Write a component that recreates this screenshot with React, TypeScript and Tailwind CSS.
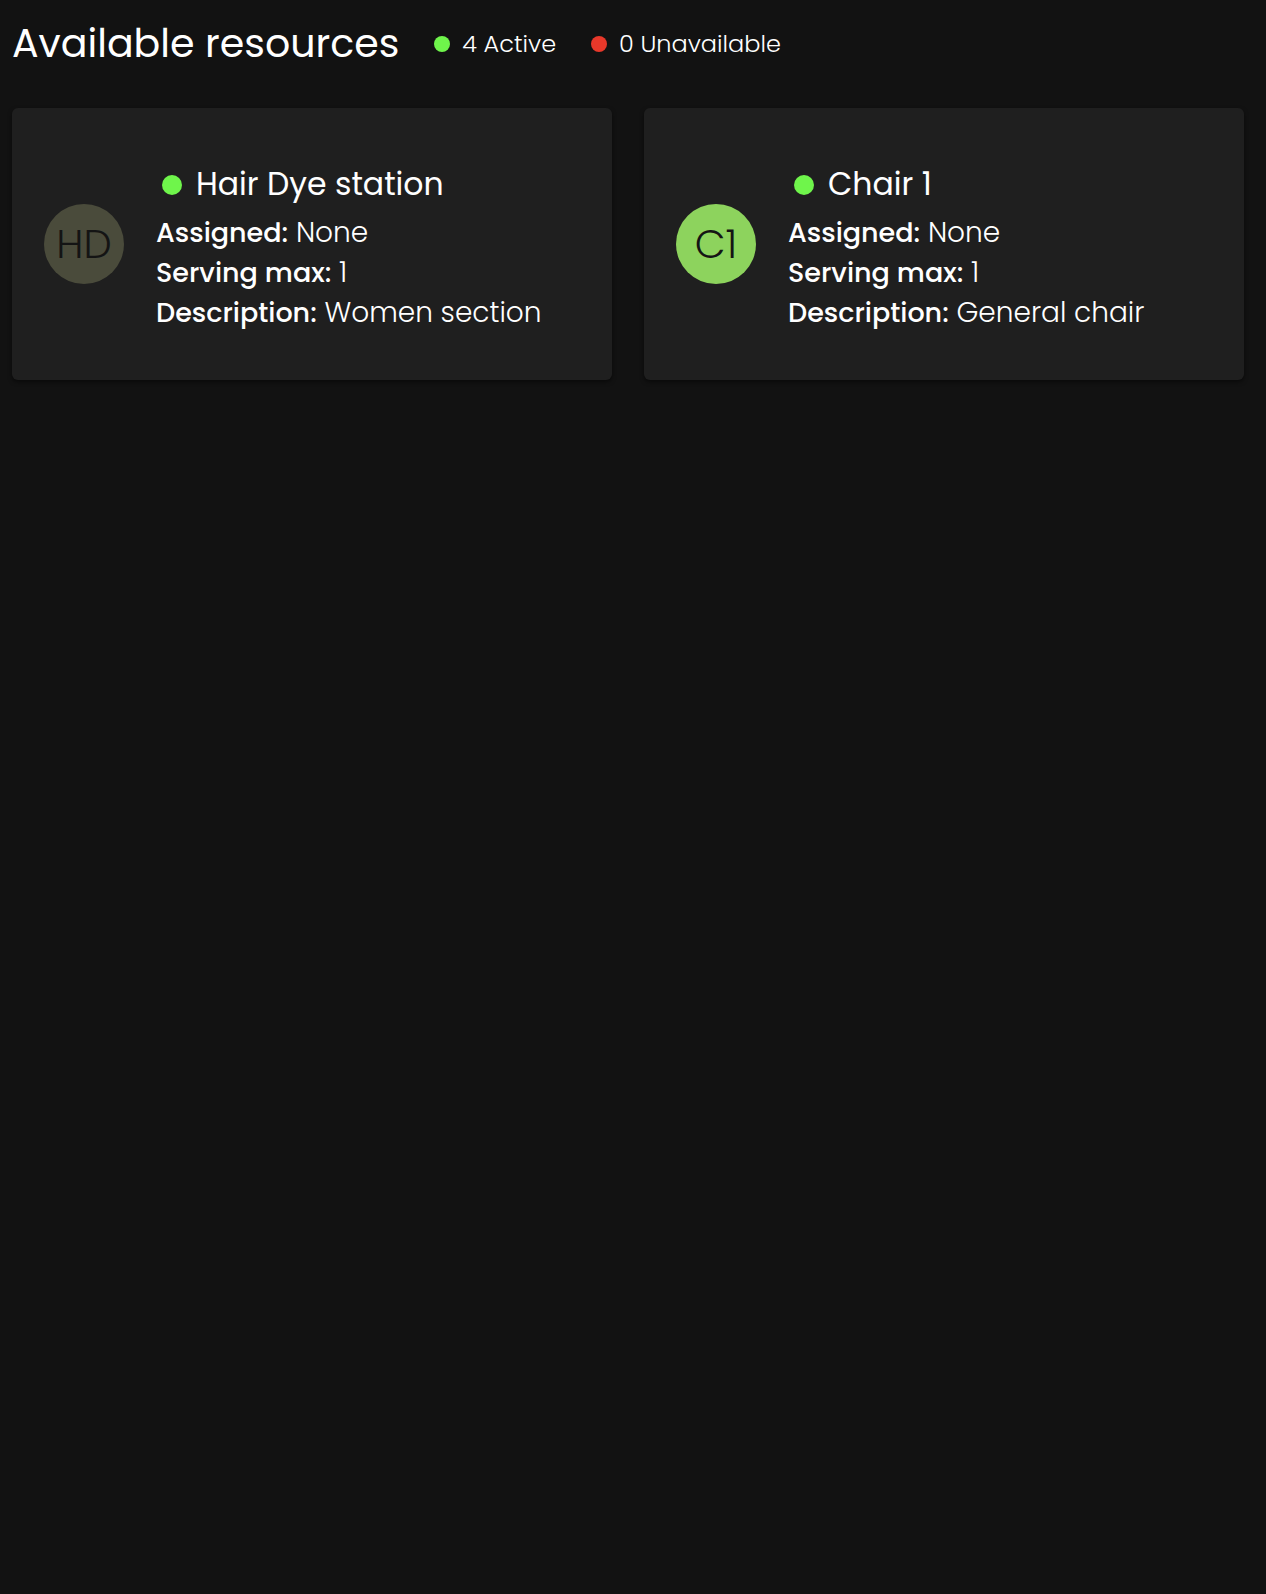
import React from 'react';

interface Resource {
  initials: string;
  name: string;
  assigned: string;
  servingMax: number;
  description: string;
  avatarClass: string;
}

const resources: Resource[] = [
  {
    initials: 'HD',
    name: 'Hair Dye station',
    assigned: 'None',
    servingMax: 1,
    description: 'Women section',
    avatarClass: 'bg-[#4a4b3b]'
  },
  {
    initials: 'C1',
    name: 'Chair 1',
    assigned: 'None',
    servingMax: 1,
    description: 'General chair',
    avatarClass: 'bg-[#8dd35d]'
  }
];

const ResourceCard: React.FC<{ resource: Resource }> = ({ resource }) => {
  return (
    <div className="h-[272px] flex items-center gap-8 pl-8 rounded-md bg-[#1f1f1f] shadow-[0_2px_4px_rgba(0,0,0,0.5)]">
      {/* Avatar */}
      <div
        className={`w-20 h-20 shrink-0 rounded-full flex items-center justify-center text-[40px] font-light text-[#141414] ${resource.avatarClass}`}
      >
        {resource.initials}
      </div>

      {/* Details */}
      <div className="mt-[7px] text-white">
        <div className="flex items-center gap-[14px] ml-1.5 mb-[6px] text-[31.5px] leading-[45px]">
          <span className="w-5 h-5 rounded-full bg-[#6ff54b]"></span>
          <span>{resource.name}</span>
        </div>
        <div className="text-[28px] leading-[40px] font-light">
          <span className="text-[27px] font-medium">Assigned:</span> {resource.assigned}
        </div>
        <div className="text-[28px] leading-[40px] font-light">
          <span className="text-[27px] font-medium">Serving max:</span> {resource.servingMax}
        </div>
        <div className="text-[28px] leading-[40px] font-light">
          <span className="text-[27px] font-medium">Description:</span> {resource.description}
        </div>
      </div>
    </div>
  );
};

export default function App() {
  return (
    <div
      className="min-h-screen bg-[#121212] text-white pl-3 pr-[22px] pt-6"
      style={{ fontFamily: 'Poppins, Inter, "Noto Sans", sans-serif' }}
    >
      {/* Header */}
      <div className="flex items-center">
        <h1 className="text-[39.5px] leading-[40px] font-normal">Available resources</h1>
        <div className="flex items-center gap-[12px] ml-[35px] text-[24px] font-light">
          <span className="w-4 h-4 rounded-full bg-[#6ff54b]"></span>
          <span>4 Active</span>
        </div>
        <div className="flex items-center gap-[12px] ml-[35px] text-[24px] font-light">
          <span className="w-4 h-4 rounded-full bg-[#e8382a]"></span>
          <span>0 Unavailable</span>
        </div>
      </div>

      {/* Cards */}
      <div className="grid grid-cols-2 gap-8 mt-11">
        {resources.map(resource => (
          <ResourceCard key={resource.initials} resource={resource} />
        ))}
      </div>
    </div>
  );
}
